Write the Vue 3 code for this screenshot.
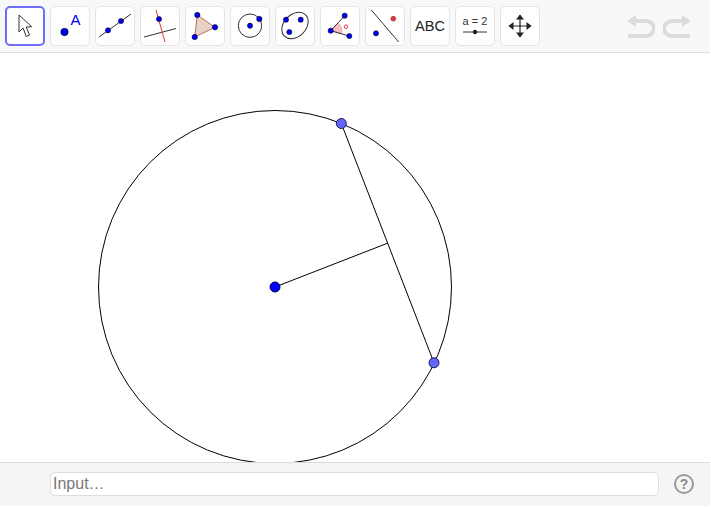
<script setup>
// construcción: circunferencia, cuerda y segmento centro -> punto medio
const center = { x: 275, y: 287 }
const radius = 176.5
const chordA = { x: 341.3, y: 123.5 }
const chordB = { x: 434, y: 362.8 }
const mid = { x: (chordA.x + chordB.x) / 2, y: (chordA.y + chordB.y) / 2 }
</script>

<template>
  <div class="applet">
    <header class="toolbar">
      <button class="tool active" title="Move">
        <svg viewBox="0 0 40 40">
          <path d="M14 9 L14 26 L18 22 L21.3 30.5 L24.5 29 L21.3 21 L26.7 20.7 Z" fill="#fff" stroke="#333" stroke-width="1" stroke-linejoin="round" />
        </svg>
      </button>
      <button class="tool" title="Point">
        <svg viewBox="0 0 40 40">
          <circle cx="14.5" cy="26" r="3.7" fill="#0000e6" stroke="#000" stroke-width=".6" />
          <text x="20.4" y="19" class="icon-a">A</text>
        </svg>
      </button>
      <button class="tool" title="Line">
        <svg viewBox="0 0 40 40">
          <line x1="4" y1="31" x2="36" y2="8" class="ln" />
          <circle cx="13" cy="24.3" r="2.6" class="pt" />
          <circle cx="26" cy="15" r="2.6" class="pt" />
        </svg>
      </button>
      <button class="tool" title="Perpendicular">
        <svg viewBox="0 0 40 40">
          <line x1="4" y1="31" x2="36" y2="22.5" class="ln" />
          <line x1="16" y1="4" x2="25" y2="36" stroke="#e8323c" stroke-width="1" />
          <circle cx="19" cy="13" r="2.6" class="pt" />
        </svg>
      </button>
      <button class="tool" title="Polygon">
        <svg viewBox="0 0 40 40">
          <polygon points="12.3,9 30,21.3 9.7,31" fill="#e8d2c8" stroke="#bf6e5c" stroke-width="1" />
          <circle cx="12.3" cy="9" r="2.7" class="pt" />
          <circle cx="30" cy="21.3" r="2.7" class="pt" />
          <circle cx="9.7" cy="31" r="2.7" class="pt" />
        </svg>
      </button>
      <button class="tool" title="Circle">
        <svg viewBox="0 0 40 40">
          <circle cx="20" cy="19.7" r="11.7" fill="none" stroke="#333" stroke-width="1" />
          <circle cx="20" cy="19.7" r="2.6" class="pt" />
          <circle cx="29.3" cy="13" r="2.7" class="pt" />
        </svg>
      </button>
      <button class="tool" title="Ellipse">
        <svg viewBox="0 0 40 40">
          <ellipse cx="20" cy="19.5" rx="15" ry="11" transform="rotate(-45 20 19.5)" fill="none" stroke="#333" stroke-width="1" />
          <circle cx="11" cy="13.7" r="2.6" class="pt" />
          <circle cx="25.7" cy="13.7" r="2.6" class="pt" />
          <circle cx="14.3" cy="26" r="2.6" class="pt" />
        </svg>
      </button>
      <button class="tool" title="Angle">
        <svg viewBox="0 0 40 40">
          <path d="M10.7 24.7 L18 17 A11 11 0 0 1 21.5 27.7 Z" fill="#f7c0c0" stroke="#e58a8a" stroke-width=".6" />
          <line x1="10.7" y1="24.7" x2="24.7" y2="9.7" class="ln" />
          <line x1="10.7" y1="24.7" x2="29.3" y2="30" class="ln" />
          <circle cx="26" cy="20.7" r="1.7" fill="none" stroke="#e8323c" stroke-width="1" />
          <circle cx="10.7" cy="24.7" r="2.6" class="pt" />
          <circle cx="24.7" cy="9.7" r="2.6" class="pt" />
          <circle cx="29.3" cy="30" r="2.6" class="pt" />
        </svg>
      </button>
      <button class="tool" title="Reflect">
        <svg viewBox="0 0 40 40">
          <line x1="6.3" y1="4" x2="33.7" y2="36" class="ln" />
          <circle cx="28.3" cy="12.7" r="2.4" fill="#e8323c" stroke="#7a1015" stroke-width=".5" />
          <circle cx="11" cy="27.3" r="2.6" class="pt" />
        </svg>
      </button>
      <button class="tool" title="Text"><span class="abc">ABC</span></button>
      <button class="tool" title="Slider">
        <svg viewBox="0 0 40 40">
          <text x="20" y="19" class="icon-slider">a = 2</text>
          <line x1="8" y1="26" x2="32" y2="26" class="ln" />
          <circle cx="20" cy="26" r="2.2" fill="#222" />
        </svg>
      </button>
      <button class="tool" title="Move Graphics">
        <svg viewBox="0 0 40 40">
          <path d="M20 9 V31 M9 20 H31" stroke="#222" stroke-width="1.2" />
          <path d="M20 8.5 L24 13.5 H16 Z M20 31.5 L24 26.5 H16 Z M8.5 20 L13.5 16 V24 Z M31.5 20 L26.5 16 V24 Z" fill="#222" />
        </svg>
      </button>

      <div class="history">
        <svg width="28" height="26" viewBox="0 0 28 26">
          <path d="M8 8 H18 C30 8 30 23 18 23 H1" class="hist" />
          <path d="M0 8 L9 2 V14 Z" fill="#dcdcdc" />
        </svg>
        <svg width="28" height="26" viewBox="0 0 28 26">
          <path d="M20 8 H10 C-2 8 -2 23 10 23 H27" class="hist" />
          <path d="M28 8 L19 2 V14 Z" fill="#dcdcdc" />
        </svg>
      </div>
    </header>

    <main class="canvas">
      <svg width="710" height="409" viewBox="0 53 710 409">
        <circle :cx="center.x" :cy="center.y" :r="radius" class="geo" />
        <line :x1="chordA.x" :y1="chordA.y" :x2="chordB.x" :y2="chordB.y" class="geo" />
        <line :x1="center.x" :y1="center.y" :x2="mid.x" :y2="mid.y" class="geo" />
        <circle :cx="chordA.x" :cy="chordA.y" r="5" class="free" />
        <circle :cx="chordB.x" :cy="chordB.y" r="5" class="free" />
        <circle :cx="center.x" :cy="center.y" r="5" class="fixed" />
      </svg>
    </main>

    <footer class="inputbar">
      <input class="input" type="text" placeholder="Input…" />
      <button class="help" title="Help">?</button>
    </footer>
  </div>
</template>

<style scoped>
.applet {
  width: 710px;
  height: 506px;
  display: flex;
  flex-direction: column;
  font-family: "Liberation Sans", Arial, sans-serif;
  overflow: hidden;
}
.toolbar {
  height: 53px;
  box-sizing: border-box;
  flex: none;
  display: flex;
  align-items: flex-start;
  gap: 5px;
  padding: 6px 0 0 5px;
  background: #f8f8f8;
  border-bottom: 1px solid #e0e0e0;
}
.tool {
  width: 40px;
  height: 40px;
  flex: none;
  padding: 0;
  box-sizing: border-box;
  display: flex;
  align-items: center;
  justify-content: center;
  background: #fff;
  border: 1px solid #e4e4e4;
  border-radius: 5px;
}
.tool svg {
  width: 40px;
  height: 40px;
  flex: none;
}
.tool.active {
  border: 2px solid #6f6cf5;
}
.abc {
  font-size: 14.5px;
  color: #222;
}
.ln {
  stroke: #333;
  stroke-width: 1;
}
.pt {
  fill: #0000f0;
  stroke: #000;
  stroke-width: 0.5;
}
.icon-a {
  font-size: 15px;
  fill: #0000f0;
}
.icon-slider {
  font-size: 11px;
  fill: #333;
  text-anchor: middle;
}
.history {
  margin-left: auto;
  margin-right: 19px;
  margin-top: 7px;
  display: flex;
  gap: 8px;
}
.hist {
  fill: none;
  stroke: #dcdcdc;
  stroke-width: 4;
}
.canvas {
  flex: 1;
  min-height: 0;
  background: #fff;
  overflow: hidden;
}
.canvas svg {
  display: block;
}
.geo {
  fill: none;
  stroke: #000;
  stroke-width: 1;
}
.free {
  fill: #6464ff;
  stroke: #1a1a50;
  stroke-width: 1;
}
.fixed {
  fill: #0000ff;
  stroke: #000050;
  stroke-width: 1;
}
.inputbar {
  height: 44px;
  flex: none;
  box-sizing: border-box;
  display: flex;
  align-items: center;
  gap: 15px;
  padding: 0 16px 2px 50px;
  background: #f5f5f5;
  border-top: 1px solid #dcdcdc;
}
.input {
  flex: 1;
  min-width: 0;
  height: 24px;
  box-sizing: border-box;
  padding: 0 2px;
  border: 1px solid #dedede;
  border-radius: 5px;
  background: #fff;
  font: 16px "Liberation Sans", Arial, sans-serif;
  outline: none;
}
.input::placeholder {
  color: #777;
  opacity: 1;
}
.help {
  width: 20px;
  height: 20px;
  flex: none;
  padding: 0;
  box-sizing: border-box;
  border: 2px solid #999;
  border-radius: 50%;
  background: none;
  color: #888;
  font: bold 14px/16px "Liberation Sans", Arial, sans-serif;
}
</style>
